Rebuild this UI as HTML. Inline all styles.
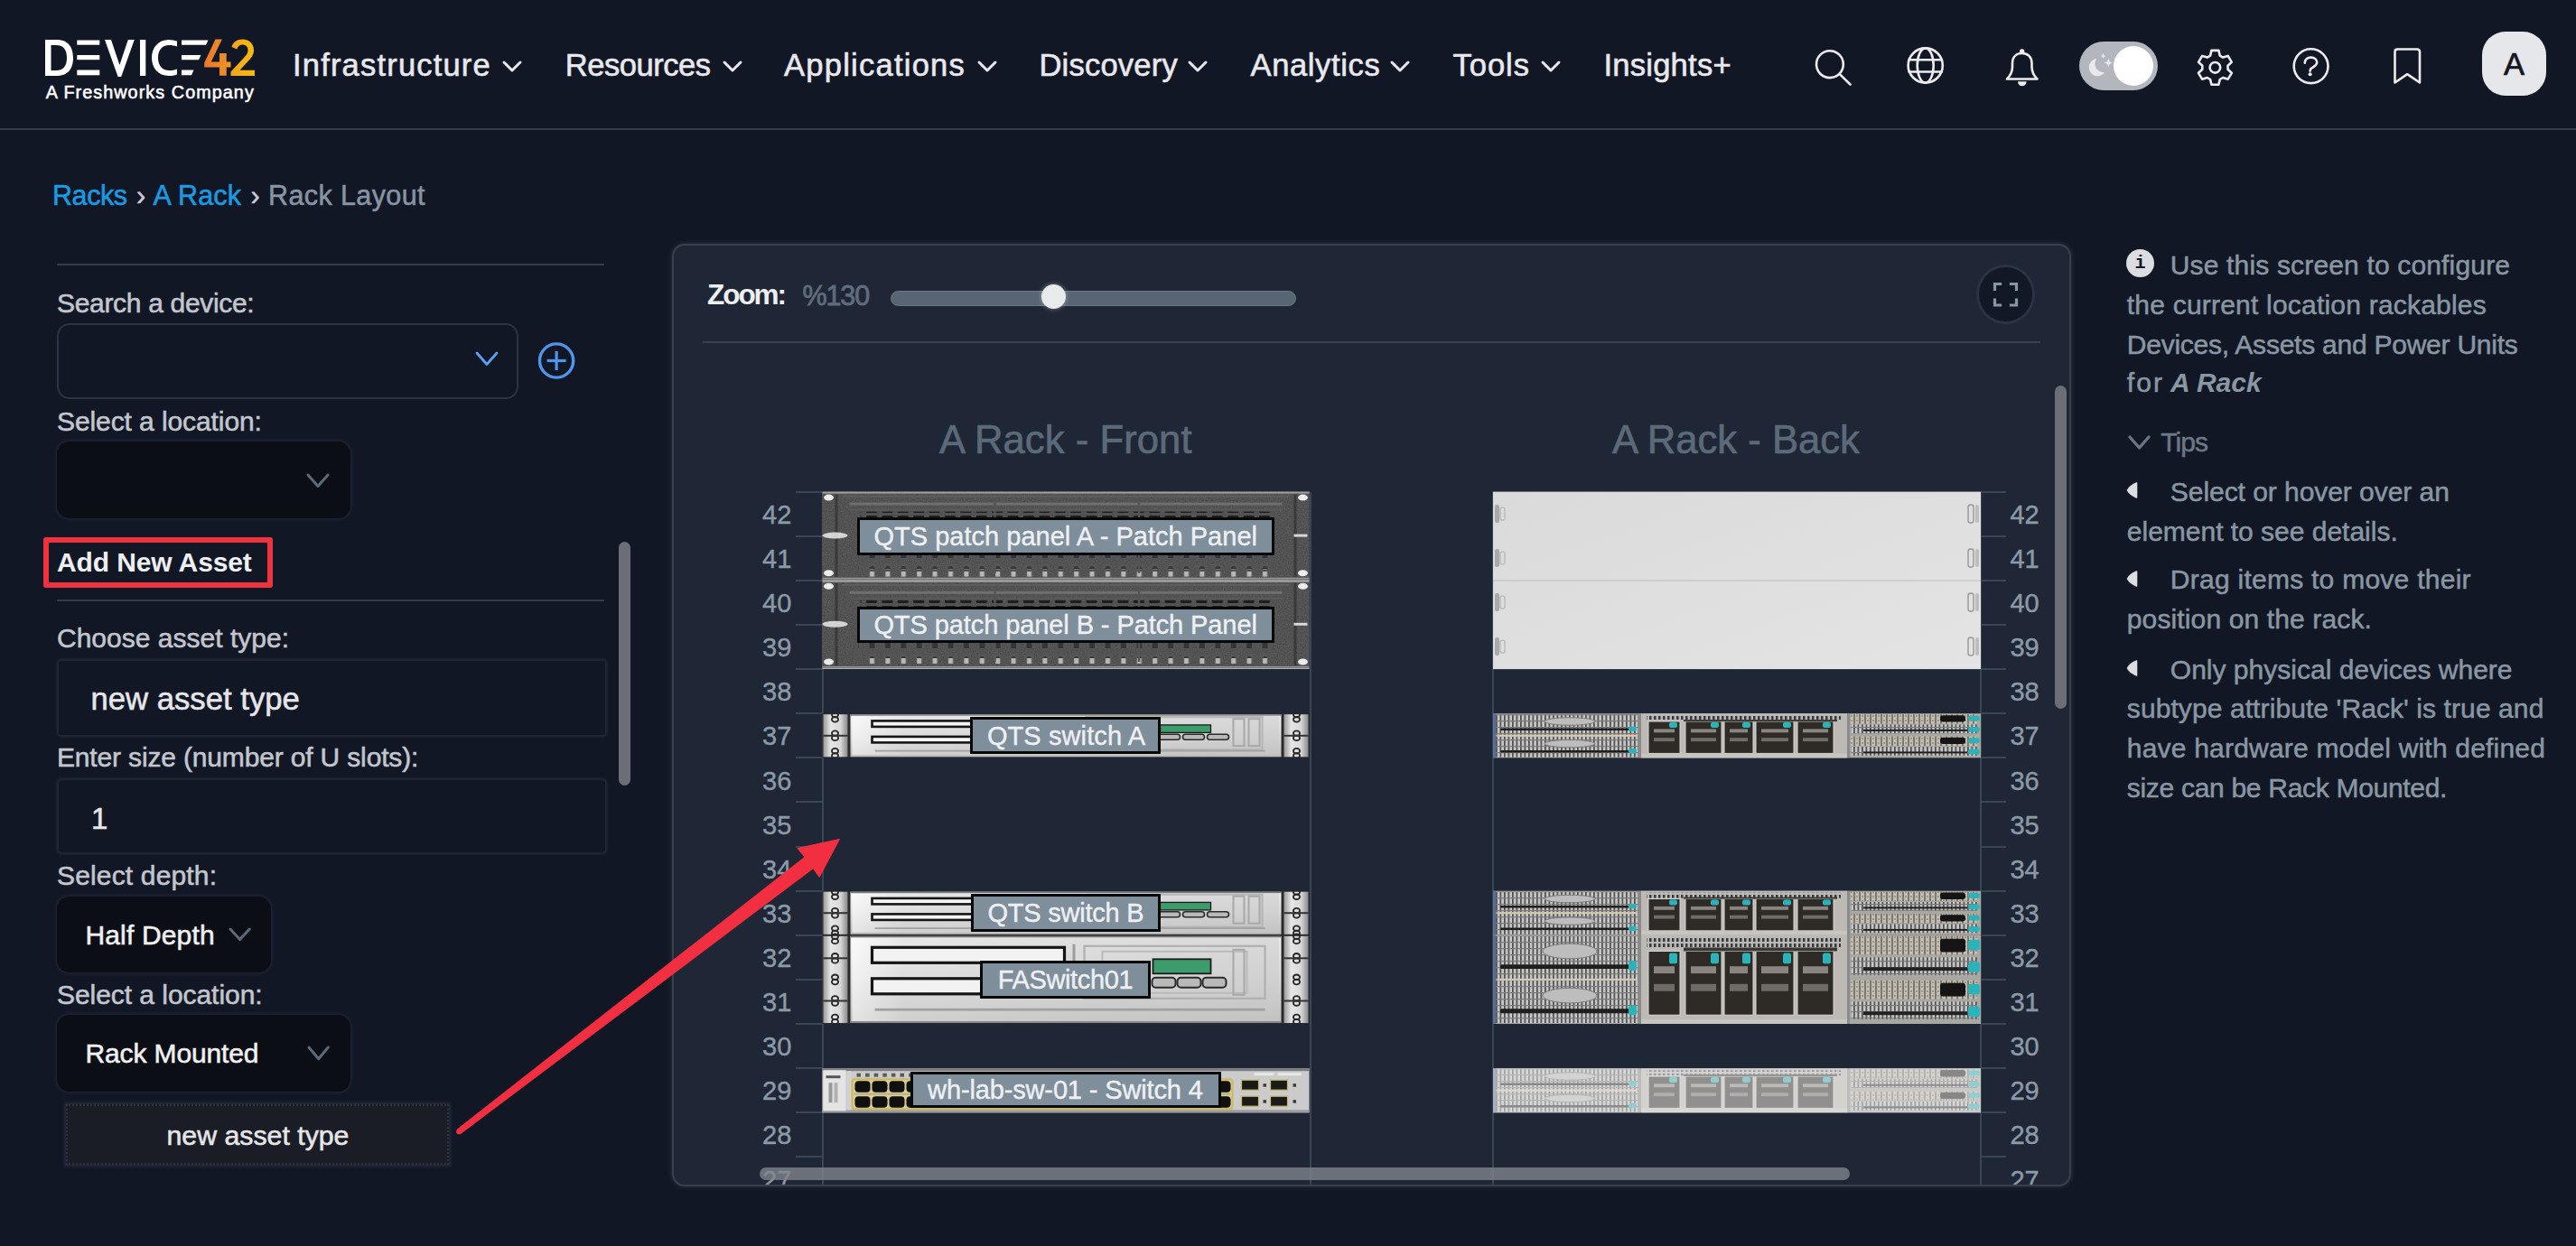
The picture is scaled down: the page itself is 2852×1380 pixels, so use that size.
<!DOCTYPE html>
<html><head><meta charset="utf-8">
<style>
*{margin:0;padding:0;box-sizing:border-box}
html,body{width:2852px;height:1380px;overflow:hidden;background:#121726;font-family:"Liberation Sans",sans-serif;position:relative}
.a{position:absolute;white-space:nowrap;line-height:1}
.box{position:absolute}
.dev{position:absolute;overflow:hidden}
.dl{position:absolute;background:#7e8e9a;border:3px solid #080808;color:#eef0f2;font-size:29px;line-height:1;white-space:nowrap;text-align:center}
</style></head><body>
<div class="box" style="left:0.0px;top:142.0px;width:2852.0px;height:2.0px;background:#353b49"></div>
<svg class="box" style="left:44px;top:38px" width="250" height="80" viewBox="44 38 250 80">
<defs><linearGradient id="g42" gradientUnits="userSpaceOnUse" x1="226" x2="282" y1="0" y2="0"><stop offset="0" stop-color="#e8792a"/><stop offset="0.45" stop-color="#ee8f26"/><stop offset="0.55" stop-color="#f3a51c"/><stop offset="1" stop-color="#f6bb12"/></linearGradient></defs>
<g fill="#ffffff">
<path d="M50,44 L63,44 C76,44 81,53 81,64 C81,75 76,84 63,84 L50,84 Z M56.5,50 L56.5,78 L62,78 C71,78 74,72 74,64 C74,56 71,50 62,50 Z"/>
<rect x="85.3" y="44.5" width="25" height="5.2"/>
<rect x="85.3" y="61" width="25" height="5.2"/>
<rect x="85.3" y="77.5" width="25" height="5.8"/>
<path d="M116,44 L123,44 L132.4,72 L141.8,44 L148.8,44 L134.2,85 L130.6,85 Z"/>
<rect x="155" y="44" width="6.3" height="40"/>
<path d="M196,45.5 L196,51.5 C193,50.5 190.5,50 187.5,50 C179,50 175,56 175,64 C175,72 179,78 187.5,78 C190.5,78 193,77.5 196,76.5 L196,82.5 C193,83.6 190,84 187,84 C175,84 168,75 168,64 C168,53 175,44 187,44 C190,44 193,44.5 196,45.5 Z"/>
<path d="M201,44.5 L230.5,44.5 L228,49.7 L201,49.7 Z"/>
<path d="M201,61 L222.5,61 L220,66.2 L201,66.2 Z"/>
<path d="M201,77.5 L214.5,77.5 L212,83.3 L201,83.3 Z"/>
</g>
<path fill="url(#g42)" d="M238.5,43.4 L245.8,43.4 L233.8,68.4 L243,68.4 L243,59 L250.7,59 L250.7,68.4 L255.5,68.4 L255.5,74.5 L250.7,74.5 L250.7,83.8 L243,83.8 L243,74.5 L226.2,74.5 L226.2,69.5 Z"/>
<path fill="url(#g42)" d="M256.5,52 C258,46.5 262.5,43.5 268.5,43.5 C276,43.5 281,48.5 281,55.5 C281,60.5 278.5,64 274.5,68 L265.5,77.8 L282,77.8 L282,84 L255.5,84 L255.5,79.5 L270,64 C273,60.8 274.5,58.5 274.5,55.5 C274.5,51.5 272,49.5 268.5,49.5 C265.5,49.5 263.3,51.3 262.3,54.5 Z"/>
</svg>
<div class="a" style="left:50.7px;top:93.0px;font-size:19.8px;color:#ffffff;letter-spacing:1.06px;-webkit-text-stroke-width:0.55px;">A Freshworks Company</div>
<div class="a" style="left:324.0px;top:55.4px;font-size:34.5px;color:#e8e8ed;letter-spacing:1.19px;-webkit-text-stroke:0.6px #e8e8ed;">Infrastructure</div>
<svg class="box" style="left:555.0px;top:65.5px" width="24.0" height="15.0"><polyline points="3,3 12.0,12.0 21.0,3" fill="none" stroke="#e8e8ed" stroke-width="3" stroke-linecap="round" stroke-linejoin="round"/></svg>
<div class="a" style="left:625.8px;top:55.4px;font-size:34.5px;color:#e8e8ed;letter-spacing:-0.46px;-webkit-text-stroke:0.6px #e8e8ed;">Resources</div>
<svg class="box" style="left:798.6px;top:65.5px" width="24.0" height="15.0"><polyline points="3,3 12.0,12.0 21.0,3" fill="none" stroke="#e8e8ed" stroke-width="3" stroke-linecap="round" stroke-linejoin="round"/></svg>
<div class="a" style="left:868.0px;top:55.4px;font-size:34.5px;color:#e8e8ed;letter-spacing:1.25px;-webkit-text-stroke:0.6px #e8e8ed;">Applications</div>
<svg class="box" style="left:1080.6px;top:65.5px" width="24.0" height="15.0"><polyline points="3,3 12.0,12.0 21.0,3" fill="none" stroke="#e8e8ed" stroke-width="3" stroke-linecap="round" stroke-linejoin="round"/></svg>
<div class="a" style="left:1150.4px;top:55.4px;font-size:34.5px;color:#e8e8ed;letter-spacing:0.24px;-webkit-text-stroke:0.6px #e8e8ed;">Discovery</div>
<svg class="box" style="left:1314.0px;top:65.5px" width="24.0" height="15.0"><polyline points="3,3 12.0,12.0 21.0,3" fill="none" stroke="#e8e8ed" stroke-width="3" stroke-linecap="round" stroke-linejoin="round"/></svg>
<div class="a" style="left:1384.5px;top:55.4px;font-size:34.5px;color:#e8e8ed;letter-spacing:0.64px;-webkit-text-stroke:0.6px #e8e8ed;">Analytics</div>
<svg class="box" style="left:1538.0px;top:65.5px" width="24.0" height="15.0"><polyline points="3,3 12.0,12.0 21.0,3" fill="none" stroke="#e8e8ed" stroke-width="3" stroke-linecap="round" stroke-linejoin="round"/></svg>
<div class="a" style="left:1608.5px;top:55.4px;font-size:34.5px;color:#e8e8ed;letter-spacing:1.00px;-webkit-text-stroke:0.6px #e8e8ed;">Tools</div>
<svg class="box" style="left:1704.5px;top:65.5px" width="24.0" height="15.0"><polyline points="3,3 12.0,12.0 21.0,3" fill="none" stroke="#e8e8ed" stroke-width="3" stroke-linecap="round" stroke-linejoin="round"/></svg>
<div class="a" style="left:1775.4px;top:55.4px;font-size:34.5px;color:#e8e8ed;letter-spacing:0.27px;-webkit-text-stroke:0.6px #e8e8ed;">Insights+</div>
<svg class="box" style="left:2000px;top:40px" width="840" height="80" viewBox="2000 40 840 80">
<g fill="none" stroke="#ececee" stroke-width="2.6" stroke-linecap="round" stroke-linejoin="round">
<circle cx="2025.9" cy="71.2" r="14.9"/><line x1="2036.8" y1="82.1" x2="2048.5" y2="93.5"/>
<circle cx="2131.7" cy="72.5" r="19.1"/><ellipse cx="2131.7" cy="72.5" rx="9" ry="19.1"/><line x1="2113.6" y1="66.3" x2="2149.8" y2="66.3"/><line x1="2113.6" y1="79.5" x2="2149.8" y2="79.5"/>
<path d="M2222,87.5 L2255.5,87.5 C2252,84 2249.5,80 2249.5,74 L2249.5,70 C2249.5,63 2245,59 2238.7,59 C2232.4,59 2228,63 2228,70 L2228,74 C2228,80 2225.5,84 2222,87.5 Z"/>
<circle cx="2452.4" cy="74.8" r="5.8"/>
<path d="M2457.7,61.6 L2456.4,55.9 L2448.4,55.9 L2447.1,61.6 L2443.7,63.6 L2438.1,61.9 L2434.0,68.8 L2438.3,72.8 L2438.3,76.8 L2434.0,80.8 L2438.1,87.7 L2443.7,86.0 L2447.1,88.0 L2448.4,93.7 L2456.4,93.7 L2457.7,88.0 L2461.1,86.0 L2466.7,87.7 L2470.8,80.8 L2466.5,76.8 L2466.5,72.8 L2470.8,68.8 L2466.7,61.9 L2461.1,63.6 Z"/>
<circle cx="2558.6" cy="73.2" r="18.9"/>
<path d="M2551.8,69.8 C2551.8,65.8 2554.6,63.6 2558.5,63.6 C2562.5,63.6 2565.2,65.9 2565.2,69.1 C2565.2,72.4 2561.8,73.9 2559.4,75.4 C2558,76.3 2557.6,77.2 2557.6,78.6"/>
<path d="M2651.5,91.5 L2651.5,57.5 C2651.5,55.3 2652.7,54.5 2654.5,54.5 L2676,54.5 C2677.8,54.5 2679,55.3 2679,57.5 L2679,91.5 L2665.2,82.2 Z"/>
</g>
<circle cx="2557.6" cy="82.2" r="2" fill="#ececee"/>
<circle cx="2238.7" cy="57" r="2.7" fill="#ececee"/><path d="M2234,90.3 L2243.6,90.3 C2243.4,93.5 2241.4,95.3 2238.8,95.3 C2236.2,95.3 2234.2,93.5 2234,90.3 Z" fill="#ececee"/>
</svg>
<div class="box" style="left:2302.0px;top:45.8px;width:87.0px;height:54.0px;background:#b3b6bc;border-radius:27px"></div>
<div class="box" style="left:2339.5px;top:50.5px;width:44.5px;height:44.5px;border-radius:50%;background:#ffffff"></div>
<svg class="box" style="left:2300px;top:50px" width="45" height="45" viewBox="2300 50 45 45">
<path d="M2321.5,65 C2315.5,66 2312.8,70.5 2312.8,74.8 C2312.8,80 2317,84.2 2322,84.2 C2325,84.2 2328,82.8 2330.2,80.2 C2324.5,80.5 2320,76.5 2319.5,71.5 C2319.3,69 2320,67 2321.5,65 Z" fill="#e8e9ec"/>
<path d="M2328.6,58.8 L2329.5,61.2 L2331.6,62 L2329.5,62.8 L2328.6,65.2 L2327.7,62.8 L2325.6,62 L2327.7,61.2 Z" fill="#e8e9ec"/>
<path d="M2334.4,64.8 L2335.7,68.3 L2339,69.6 L2335.7,70.9 L2334.4,74.4 L2333.1,70.9 L2329.8,69.6 L2333.1,68.3 Z" fill="#e8e9ec"/>
</svg>
<div class="box" style="left:2748.0px;top:35.0px;width:71.0px;height:71.0px;background:#e6e7eb;border-radius:26px"></div>
<div class="a" style="left:2772.0px;top:53.6px;font-size:34.5px;color:#15181f;letter-spacing:0.00px;-webkit-text-stroke-width:0.7px;">A</div>
<div class="a" style="left:58.0px;top:201.2px;font-size:30.5px;color:#1c9ae0;letter-spacing:-0.43px;-webkit-text-stroke-width:0.55px;">Racks</div>
<div class="a" style="left:151.0px;top:201.2px;font-size:30.5px;color:#c9ccd2;letter-spacing:0.00px;-webkit-text-stroke-width:0.55px;">›</div>
<div class="a" style="left:169.6px;top:201.2px;font-size:30.5px;color:#1c9ae0;letter-spacing:0.14px;-webkit-text-stroke-width:0.55px;">A Rack</div>
<div class="a" style="left:277.5px;top:201.2px;font-size:30.5px;color:#c9ccd2;letter-spacing:0.00px;-webkit-text-stroke-width:0.55px;">›</div>
<div class="a" style="left:297.0px;top:201.2px;font-size:30.5px;color:#8794a2;letter-spacing:0.40px;-webkit-text-stroke-width:0.55px;">Rack Layout</div>
<div class="box" style="left:63.0px;top:291.5px;width:606.0px;height:2.0px;background:#343a47"></div>
<div class="a" style="left:63.0px;top:321.0px;font-size:30px;color:#c3c6cd;letter-spacing:-0.32px;-webkit-text-stroke-width:0.55px;">Search a device:</div>
<div class="box" style="left:63.0px;top:358.3px;width:510.5px;height:83.7px;border:2px solid #2b3241;border-radius:14px;background:#121726"></div>
<svg class="box" style="left:524.5px;top:388.0px" width="28.0" height="18.5"><polyline points="3,3 14.0,15.5 25.0,3" fill="none" stroke="#5b9ff0" stroke-width="2.8" stroke-linecap="round" stroke-linejoin="round"/></svg>
<svg class="box" style="left:590px;top:374px" width="52" height="52" viewBox="590 374 52 52">
<circle cx="616.1" cy="399.5" r="18.6" fill="none" stroke="#4f96ea" stroke-width="3.4"/>
<line x1="616.1" y1="389" x2="616.1" y2="410" stroke="#4f96ea" stroke-width="3.2"/>
<line x1="605.6" y1="399.5" x2="626.6" y2="399.5" stroke="#4f96ea" stroke-width="3.2"/>
</svg>
<div class="a" style="left:63.0px;top:452.1px;font-size:30px;color:#c3c6cd;letter-spacing:-0.09px;-webkit-text-stroke-width:0.55px;">Select a location:</div>
<div class="box" style="left:63.0px;top:489.0px;width:325.2px;height:85.3px;background:#0b0e14;border-radius:14px;box-shadow:0 0 4px 1px #232a38"></div>
<svg class="box" style="left:338.0px;top:522.5px" width="28.0" height="18.5"><polyline points="3,3 14.0,15.5 25.0,3" fill="none" stroke="#5d6878" stroke-width="3" stroke-linecap="round" stroke-linejoin="round"/></svg>
<div class="box" style="left:48.2px;top:595.3px;width:253.8px;height:55.5px;border:6px solid #f0323f;border-radius:3px"></div>
<div class="a" style="left:63.0px;top:608.1px;font-size:30px;color:#eeeff1;font-weight:700;letter-spacing:-0.12px;">Add New Asset</div>
<div class="box" style="left:63.0px;top:663.6px;width:606.0px;height:2.0px;background:#343a47"></div>
<div class="box" style="left:685.0px;top:599.6px;width:13.0px;height:270.8px;background:#6b6e76;border-radius:7px"></div>
<div class="a" style="left:63.0px;top:692.3px;font-size:30px;color:#c3c6cd;letter-spacing:0.01px;-webkit-text-stroke-width:0.55px;">Choose asset type:</div>
<div class="box" style="left:63.0px;top:729.5px;width:609.4px;height:86.0px;border:2px solid #1f2633;border-radius:5px;box-shadow:0 0 3px 1px #1c2230"></div>
<div class="a" style="left:100.4px;top:756.6px;font-size:34.7px;color:#e6e6e9;letter-spacing:0.01px;-webkit-text-stroke-width:0.55px;">new asset type</div>
<div class="a" style="left:63.0px;top:823.8px;font-size:30px;color:#c3c6cd;letter-spacing:-0.16px;-webkit-text-stroke-width:0.55px;">Enter size (number of U slots):</div>
<div class="box" style="left:63.0px;top:862.0px;width:609.4px;height:84.3px;border:2px solid #1f2633;border-radius:5px;box-shadow:0 0 3px 1px #1c2230"></div>
<div class="a" style="left:101.0px;top:889.7px;font-size:33px;color:#e6e6e9;letter-spacing:0.00px;-webkit-text-stroke-width:0.55px;">1</div>
<div class="a" style="left:63.0px;top:954.6px;font-size:30px;color:#c3c6cd;letter-spacing:0.16px;-webkit-text-stroke-width:0.55px;">Select depth:</div>
<div class="box" style="left:63.0px;top:992.8px;width:237.0px;height:83.9px;background:#0b0e14;border-radius:14px;box-shadow:0 0 4px 1px #232a38"></div>
<div class="a" style="left:94.4px;top:1021.3px;font-size:30px;color:#f0f0f2;letter-spacing:0.17px;-webkit-text-stroke-width:0.55px;">Half Depth</div>
<svg class="box" style="left:251.5px;top:1026.0px" width="27.2" height="17.6"><polyline points="3,3 13.6,14.6 24.2,3" fill="none" stroke="#5d6878" stroke-width="3" stroke-linecap="round" stroke-linejoin="round"/></svg>
<div class="a" style="left:63.0px;top:1087.3px;font-size:30px;color:#c3c6cd;letter-spacing:-0.05px;-webkit-text-stroke-width:0.55px;">Select a location:</div>
<div class="box" style="left:63.0px;top:1123.9px;width:325.0px;height:84.7px;background:#0b0e14;border-radius:14px;box-shadow:0 0 4px 1px #232a38"></div>
<div class="a" style="left:94.5px;top:1152.4px;font-size:30px;color:#f0f0f2;letter-spacing:-0.13px;-webkit-text-stroke-width:0.55px;">Rack Mounted</div>
<svg class="box" style="left:338.5px;top:1157.0px" width="27.3" height="18.8"><polyline points="3,3 13.7,15.8 24.3,3" fill="none" stroke="#5d6878" stroke-width="3" stroke-linecap="round" stroke-linejoin="round"/></svg>
<div class="box" style="left:73.2px;top:1223.4px;width:424.3px;height:66.2px;background:#1a1d25;border:2px dotted #2b3242;box-shadow:0 0 3px 2px #252c3c"></div>
<div class="a" style="left:184.5px;top:1243.0px;font-size:30.3px;color:#e6e6e9;letter-spacing:-0.01px;-webkit-text-stroke-width:0.55px;">new asset type</div>
<div class="box" style="left:743.5px;top:269.5px;width:1549.5px;height:1044.0px;background:#1f2736;border:2px solid #3a3f4c;border-radius:14px;box-shadow:0 0 5px 1px rgba(58,63,76,0.55)"></div>
<div class="a" style="left:783.0px;top:310.8px;font-size:31.5px;color:#eeeff1;font-weight:700;letter-spacing:-2.05px;">Zoom:</div>
<div class="a" style="left:888.4px;top:311.7px;font-size:30.5px;color:#5f6c7b;letter-spacing:-1.07px;-webkit-text-stroke-width:0.8px;">%130</div>
<div class="box" style="left:986.2px;top:321.9px;width:448.4px;height:17.3px;background:#586574;border:1.5px solid #6a7787;border-radius:9px"></div>
<div class="box" style="left:1152.8px;top:315px;width:26.8px;height:26.8px;border-radius:50%;background:#e9eaec;box-shadow:0 0 4px 1px rgba(210,215,225,0.35)"></div>
<div class="box" style="left:2188.0px;top:292.6px;width:65.0px;height:66.2px;background:#121826;border:3px solid #2b3343;border-radius:50%"></div>
<svg class="box" style="left:2200px;top:306px" width="42" height="42" viewBox="2200 306 42 42">
<g fill="none" stroke="#8696a6" stroke-width="3.2" stroke-linecap="square">
<polyline points="2208.5,320.5 2208.5,314.5 2214.5,314.5"/>
<polyline points="2226.5,314.5 2232.5,314.5 2232.5,320.5"/>
<polyline points="2232.5,332 2232.5,338 2226.5,338"/>
<polyline points="2214.5,338 2208.5,338 2208.5,332"/>
</g></svg>
<div class="box" style="left:778.0px;top:377.8px;width:1481.0px;height:2.0px;background:#3a4252"></div>
<div class="a" style="left:1040.0px;top:466.1px;font-size:43.6px;color:#5b6979;letter-spacing:0.07px;-webkit-text-stroke-width:0.7px;">A Rack - Front</div>
<div class="a" style="left:1785.0px;top:466.1px;font-size:43.6px;color:#5b6979;letter-spacing:0.01px;-webkit-text-stroke-width:0.7px;">A Rack - Back</div>
<div class="box" style="left:745.5px;top:380px;width:1545.5px;height:931.5px;overflow:hidden;border-radius:0 0 12px 12px">
<div class="box" style="left:164.0px;top:164.6px;width:2.0px;height:775.4px;background:#3a4556"></div>
<div class="box" style="left:704.0px;top:164.6px;width:2.0px;height:775.4px;background:#3a4556"></div>
<div class="box" style="left:906.5px;top:164.6px;width:2.0px;height:775.4px;background:#3a4556"></div>
<div class="box" style="left:1446.8px;top:164.6px;width:2.0px;height:775.4px;background:#3a4556"></div>
<div class="box" style="left:135.5px;top:163.6px;width:29.0px;height:2.0px;background:#3a4556"></div>
<div class="box" style="left:1447.5px;top:163.6px;width:28.0px;height:2.0px;background:#3a4556"></div>
<div class="a" style="left:98.5px;top:175.8px;font-size:29px;color:#8b9aa6;letter-spacing:0.00px;-webkit-text-stroke-width:0.4px;">42</div>
<div class="a" style="left:1479.9px;top:175.8px;font-size:29px;color:#8b9aa6;letter-spacing:0.00px;-webkit-text-stroke-width:0.4px;">42</div>
<div class="box" style="left:135.5px;top:212.7px;width:29.0px;height:2.0px;background:#3a4556"></div>
<div class="box" style="left:1447.5px;top:212.7px;width:28.0px;height:2.0px;background:#3a4556"></div>
<div class="a" style="left:98.5px;top:224.9px;font-size:29px;color:#8b9aa6;letter-spacing:0.00px;-webkit-text-stroke-width:0.4px;">41</div>
<div class="a" style="left:1479.9px;top:224.9px;font-size:29px;color:#8b9aa6;letter-spacing:0.00px;-webkit-text-stroke-width:0.4px;">41</div>
<div class="box" style="left:135.5px;top:261.8px;width:29.0px;height:2.0px;background:#3a4556"></div>
<div class="box" style="left:1447.5px;top:261.8px;width:28.0px;height:2.0px;background:#3a4556"></div>
<div class="a" style="left:98.5px;top:274.0px;font-size:29px;color:#8b9aa6;letter-spacing:0.00px;-webkit-text-stroke-width:0.4px;">40</div>
<div class="a" style="left:1479.9px;top:274.0px;font-size:29px;color:#8b9aa6;letter-spacing:0.00px;-webkit-text-stroke-width:0.4px;">40</div>
<div class="box" style="left:135.5px;top:311.0px;width:29.0px;height:2.0px;background:#3a4556"></div>
<div class="box" style="left:1447.5px;top:311.0px;width:28.0px;height:2.0px;background:#3a4556"></div>
<div class="a" style="left:98.5px;top:323.1px;font-size:29px;color:#8b9aa6;letter-spacing:0.00px;-webkit-text-stroke-width:0.4px;">39</div>
<div class="a" style="left:1479.9px;top:323.1px;font-size:29px;color:#8b9aa6;letter-spacing:0.00px;-webkit-text-stroke-width:0.4px;">39</div>
<div class="box" style="left:135.5px;top:360.1px;width:29.0px;height:2.0px;background:#3a4556"></div>
<div class="box" style="left:1447.5px;top:360.1px;width:28.0px;height:2.0px;background:#3a4556"></div>
<div class="a" style="left:98.5px;top:372.2px;font-size:29px;color:#8b9aa6;letter-spacing:0.00px;-webkit-text-stroke-width:0.4px;">38</div>
<div class="a" style="left:1479.9px;top:372.2px;font-size:29px;color:#8b9aa6;letter-spacing:0.00px;-webkit-text-stroke-width:0.4px;">38</div>
<div class="box" style="left:135.5px;top:409.2px;width:29.0px;height:2.0px;background:#3a4556"></div>
<div class="box" style="left:1447.5px;top:409.2px;width:28.0px;height:2.0px;background:#3a4556"></div>
<div class="a" style="left:98.5px;top:421.4px;font-size:29px;color:#8b9aa6;letter-spacing:0.00px;-webkit-text-stroke-width:0.4px;">37</div>
<div class="a" style="left:1479.9px;top:421.4px;font-size:29px;color:#8b9aa6;letter-spacing:0.00px;-webkit-text-stroke-width:0.4px;">37</div>
<div class="box" style="left:135.5px;top:458.3px;width:29.0px;height:2.0px;background:#3a4556"></div>
<div class="box" style="left:1447.5px;top:458.3px;width:28.0px;height:2.0px;background:#3a4556"></div>
<div class="a" style="left:98.5px;top:470.5px;font-size:29px;color:#8b9aa6;letter-spacing:0.00px;-webkit-text-stroke-width:0.4px;">36</div>
<div class="a" style="left:1479.9px;top:470.5px;font-size:29px;color:#8b9aa6;letter-spacing:0.00px;-webkit-text-stroke-width:0.4px;">36</div>
<div class="box" style="left:135.5px;top:507.4px;width:29.0px;height:2.0px;background:#3a4556"></div>
<div class="box" style="left:1447.5px;top:507.4px;width:28.0px;height:2.0px;background:#3a4556"></div>
<div class="a" style="left:98.5px;top:519.6px;font-size:29px;color:#8b9aa6;letter-spacing:0.00px;-webkit-text-stroke-width:0.4px;">35</div>
<div class="a" style="left:1479.9px;top:519.6px;font-size:29px;color:#8b9aa6;letter-spacing:0.00px;-webkit-text-stroke-width:0.4px;">35</div>
<div class="box" style="left:135.5px;top:556.6px;width:29.0px;height:2.0px;background:#3a4556"></div>
<div class="box" style="left:1447.5px;top:556.6px;width:28.0px;height:2.0px;background:#3a4556"></div>
<div class="a" style="left:98.5px;top:568.7px;font-size:29px;color:#8b9aa6;letter-spacing:0.00px;-webkit-text-stroke-width:0.4px;">34</div>
<div class="a" style="left:1479.9px;top:568.7px;font-size:29px;color:#8b9aa6;letter-spacing:0.00px;-webkit-text-stroke-width:0.4px;">34</div>
<div class="box" style="left:135.5px;top:605.7px;width:29.0px;height:2.0px;background:#3a4556"></div>
<div class="box" style="left:1447.5px;top:605.7px;width:28.0px;height:2.0px;background:#3a4556"></div>
<div class="a" style="left:98.5px;top:617.8px;font-size:29px;color:#8b9aa6;letter-spacing:0.00px;-webkit-text-stroke-width:0.4px;">33</div>
<div class="a" style="left:1479.9px;top:617.8px;font-size:29px;color:#8b9aa6;letter-spacing:0.00px;-webkit-text-stroke-width:0.4px;">33</div>
<div class="box" style="left:135.5px;top:654.8px;width:29.0px;height:2.0px;background:#3a4556"></div>
<div class="box" style="left:1447.5px;top:654.8px;width:28.0px;height:2.0px;background:#3a4556"></div>
<div class="a" style="left:98.5px;top:667.0px;font-size:29px;color:#8b9aa6;letter-spacing:0.00px;-webkit-text-stroke-width:0.4px;">32</div>
<div class="a" style="left:1479.9px;top:667.0px;font-size:29px;color:#8b9aa6;letter-spacing:0.00px;-webkit-text-stroke-width:0.4px;">32</div>
<div class="box" style="left:135.5px;top:703.9px;width:29.0px;height:2.0px;background:#3a4556"></div>
<div class="box" style="left:1447.5px;top:703.9px;width:28.0px;height:2.0px;background:#3a4556"></div>
<div class="a" style="left:98.5px;top:716.1px;font-size:29px;color:#8b9aa6;letter-spacing:0.00px;-webkit-text-stroke-width:0.4px;">31</div>
<div class="a" style="left:1479.9px;top:716.1px;font-size:29px;color:#8b9aa6;letter-spacing:0.00px;-webkit-text-stroke-width:0.4px;">31</div>
<div class="box" style="left:135.5px;top:753.0px;width:29.0px;height:2.0px;background:#3a4556"></div>
<div class="box" style="left:1447.5px;top:753.0px;width:28.0px;height:2.0px;background:#3a4556"></div>
<div class="a" style="left:98.5px;top:765.2px;font-size:29px;color:#8b9aa6;letter-spacing:0.00px;-webkit-text-stroke-width:0.4px;">30</div>
<div class="a" style="left:1479.9px;top:765.2px;font-size:29px;color:#8b9aa6;letter-spacing:0.00px;-webkit-text-stroke-width:0.4px;">30</div>
<div class="box" style="left:135.5px;top:802.2px;width:29.0px;height:2.0px;background:#3a4556"></div>
<div class="box" style="left:1447.5px;top:802.2px;width:28.0px;height:2.0px;background:#3a4556"></div>
<div class="a" style="left:98.5px;top:814.3px;font-size:29px;color:#8b9aa6;letter-spacing:0.00px;-webkit-text-stroke-width:0.4px;">29</div>
<div class="a" style="left:1479.9px;top:814.3px;font-size:29px;color:#8b9aa6;letter-spacing:0.00px;-webkit-text-stroke-width:0.4px;">29</div>
<div class="box" style="left:135.5px;top:851.3px;width:29.0px;height:2.0px;background:#3a4556"></div>
<div class="box" style="left:1447.5px;top:851.3px;width:28.0px;height:2.0px;background:#3a4556"></div>
<div class="a" style="left:98.5px;top:863.4px;font-size:29px;color:#8b9aa6;letter-spacing:0.00px;-webkit-text-stroke-width:0.4px;">28</div>
<div class="a" style="left:1479.9px;top:863.4px;font-size:29px;color:#8b9aa6;letter-spacing:0.00px;-webkit-text-stroke-width:0.4px;">28</div>
<div class="box" style="left:135.5px;top:900.4px;width:29.0px;height:2.0px;background:#3a4556"></div>
<div class="box" style="left:1447.5px;top:900.4px;width:28.0px;height:2.0px;background:#3a4556"></div>
<div class="a" style="left:98.5px;top:912.6px;font-size:29px;color:#8b9aa6;letter-spacing:0.00px;-webkit-text-stroke-width:0.4px;">27</div>
<div class="a" style="left:1479.9px;top:912.6px;font-size:29px;color:#8b9aa6;letter-spacing:0.00px;-webkit-text-stroke-width:0.4px;">27</div>
<div class="box" style="left:135.5px;top:949.5px;width:29.0px;height:2.0px;background:#3a4556"></div>
<svg class="box" style="left:-746px;top:-380px" width="2852" height="1380" viewBox="0 0 2852 1380">
<defs>
<linearGradient id="swbody" x1="0" x2="0" y1="0" y2="1"><stop offset="0" stop-color="#f4f4f4"/><stop offset="0.5" stop-color="#dcdcdc"/><stop offset="1" stop-color="#b9b9b9"/></linearGradient>
<linearGradient id="swplate" x1="0" x2="1" y1="0" y2="0"><stop offset="0" stop-color="#ffffff"/><stop offset="0.12" stop-color="#dedede"/><stop offset="0.5" stop-color="#d2d2d2"/><stop offset="1" stop-color="#c8c8c8"/></linearGradient>
<linearGradient id="ear" x1="0" x2="1" y1="0" y2="0"><stop offset="0" stop-color="#9a9a9a"/><stop offset="0.3" stop-color="#e6e6e6"/><stop offset="0.7" stop-color="#d8d8d8"/><stop offset="1" stop-color="#8a8a8a"/></linearGradient>
<linearGradient id="blank" x1="0" x2="1" y1="0" y2="1"><stop offset="0" stop-color="#dadada"/><stop offset="0.5" stop-color="#dfdfdf"/><stop offset="1" stop-color="#e4e4e4"/></linearGradient>
<pattern id="ppports" x="0" y="0" width="17.4" height="10" patternUnits="userSpaceOnUse"><rect x="2" y="1" width="12" height="7" rx="1" fill="#1e1e1e"/></pattern>
<pattern id="pparch" x="0" y="0" width="17.4" height="20" patternUnits="userSpaceOnUse"><path d="M3,18 L3,8 C3,3 14,3 14,8 L14,18 Z" fill="#565656"/><path d="M5.5,18 L5.5,10 C5.5,6 11.5,6 11.5,10 L11.5,18 Z" fill="#353535"/></pattern>
<pattern id="ppdots" x="0" y="0" width="17.4" height="8" patternUnits="userSpaceOnUse"><rect x="6" y="1" width="5" height="6" fill="#b8b8b8"/></pattern>
<pattern id="grid" x="0" y="0" width="4.5" height="7" patternUnits="userSpaceOnUse"><rect width="4.5" height="7" fill="#c6c6c6"/><rect x="0" y="0" width="1.7" height="7" fill="#4f4f4f"/><rect x="0" y="0" width="4.5" height="1.2" fill="#7a7a7a"/></pattern>
<pattern id="mesh" x="0" y="0" width="6" height="5" patternUnits="userSpaceOnUse"><rect width="6" height="5" fill="#c2bdb2"/><rect x="0" y="0" width="2" height="5" fill="#7d776e"/><rect x="3" y="2" width="2" height="2" fill="#9c968c"/></pattern>
<pattern id="slots" x="0" y="0" width="5" height="6" patternUnits="userSpaceOnUse"><rect width="5" height="6" fill="#b8b8b8"/><rect x="1" y="1" width="2.5" height="4" fill="#3a3a3a"/></pattern>
<filter id="noise" x="0" y="0" width="100%" height="100%"><feTurbulence type="fractalNoise" baseFrequency="0.9" numOctaves="2" seed="3"/><feColorMatrix values="0 0 0 0 0.5  0 0 0 0 0.5  0 0 0 0 0.5  0 0 0 0.35 0"/></filter>
</defs>

<rect x="910.5" y="544.6" width="539" height="98.2" fill="#424242"/>
<rect x="910.5" y="544.6" width="539" height="98.2" filter="url(#noise)" opacity="0.8"/>
<rect x="910.5" y="544.6" width="539" height="2" fill="#a0a0a0"/>
<rect x="932.5" y="548.6" width="495" height="2" fill="#5e5e5e"/>
<rect x="910.5" y="639.8" width="539" height="1.5" fill="#9a9a9a"/>
<rect x="910.5" y="641.8" width="539" height="1" fill="#b0b0b0"/>
<rect x="924.5" y="547.6" width="3" height="91.2" fill="#2a2a2a" opacity="0.6"/>
<rect x="1432.5" y="547.6" width="3" height="91.2" fill="#2a2a2a" opacity="0.6"/>
<rect x="940.5" y="556.6" width="479" height="3" fill="#6f6f6f"/>
<rect x="940.5" y="563.6" width="479" height="2" fill="#5a5a5a"/>
<rect x="952.5" y="566.6" width="455" height="10" fill="url(#ppports)"/>
<rect x="950.5" y="610.6" width="459" height="20" fill="url(#pparch)"/>
<rect x="954.5" y="630.6" width="451" height="8" fill="url(#ppdots)"/>
<rect x="1100.2" y="552.6" width="2.5" height="82.2" fill="#555"/>
<rect x="1259.8" y="552.6" width="2.5" height="82.2" fill="#555"/>
<ellipse cx="917.5" cy="551.1" rx="5.5" ry="3.5" fill="#ececec"/>
<ellipse cx="917.5" cy="634.8" rx="5.5" ry="3.5" fill="#ececec"/>
<ellipse cx="1442.5" cy="551.1" rx="5.5" ry="3.5" fill="#ececec"/>
<ellipse cx="1442.5" cy="634.8" rx="5.5" ry="3.5" fill="#ececec"/>
<ellipse cx="924.5" cy="593.1" rx="14" ry="3.5" fill="#e2e2e2" opacity="0.9"/>
<rect x="1432.5" y="591.6" width="15" height="3" fill="#d8d8d8"/>
<rect x="910.5" y="642.8" width="539" height="98.2" fill="#424242"/>
<rect x="910.5" y="642.8" width="539" height="98.2" filter="url(#noise)" opacity="0.8"/>
<rect x="910.5" y="642.8" width="539" height="2" fill="#a0a0a0"/>
<rect x="932.5" y="646.8" width="495" height="2" fill="#5e5e5e"/>
<rect x="910.5" y="738.0" width="539" height="1.5" fill="#9a9a9a"/>
<rect x="910.5" y="740.0" width="539" height="1" fill="#b0b0b0"/>
<rect x="924.5" y="645.8" width="3" height="91.2" fill="#2a2a2a" opacity="0.6"/>
<rect x="1432.5" y="645.8" width="3" height="91.2" fill="#2a2a2a" opacity="0.6"/>
<rect x="940.5" y="654.8" width="479" height="3" fill="#6f6f6f"/>
<rect x="940.5" y="661.8" width="479" height="2" fill="#5a5a5a"/>
<rect x="952.5" y="664.8" width="455" height="10" fill="url(#ppports)"/>
<rect x="950.5" y="708.8" width="459" height="20" fill="url(#pparch)"/>
<rect x="954.5" y="728.8" width="451" height="8" fill="url(#ppdots)"/>
<rect x="1100.2" y="650.8" width="2.5" height="82.2" fill="#555"/>
<rect x="1259.8" y="650.8" width="2.5" height="82.2" fill="#555"/>
<ellipse cx="917.5" cy="649.3" rx="5.5" ry="3.5" fill="#ececec"/>
<ellipse cx="917.5" cy="733.0" rx="5.5" ry="3.5" fill="#ececec"/>
<ellipse cx="1442.5" cy="649.3" rx="5.5" ry="3.5" fill="#ececec"/>
<ellipse cx="1442.5" cy="733.0" rx="5.5" ry="3.5" fill="#ececec"/>
<ellipse cx="924.5" cy="691.3" rx="14" ry="3.5" fill="#e2e2e2" opacity="0.9"/>
<rect x="1432.5" y="689.8" width="15" height="3" fill="#d8d8d8"/>
<rect x="910.5" y="790.2" width="539" height="49.1" fill="#2a2a2a"/>
<rect x="911.5" y="791.2" width="27" height="47.1" fill="url(#ear)"/>
<rect x="1421.5" y="791.2" width="27" height="47.1" fill="url(#ear)"/>
<rect x="941.5" y="791.2" width="477" height="47.1" fill="url(#swbody)"/>
<rect x="943.5" y="793.2" width="473" height="43.1" fill="url(#swplate)" opacity="0.6"/>
<ellipse cx="924.5" cy="791.6" rx="3.6" ry="2.8" fill="none" stroke="#262626" stroke-width="1.8"/><ellipse cx="924.5" cy="796.8" rx="3.6" ry="2.8" fill="none" stroke="#262626" stroke-width="1.8"/>
<ellipse cx="1435.5" cy="791.6" rx="3.6" ry="2.8" fill="none" stroke="#262626" stroke-width="1.8"/><ellipse cx="1435.5" cy="796.8" rx="3.6" ry="2.8" fill="none" stroke="#262626" stroke-width="1.8"/>
<ellipse cx="924.5" cy="812.1" rx="3.6" ry="2.8" fill="none" stroke="#262626" stroke-width="1.8"/><ellipse cx="924.5" cy="817.4" rx="3.6" ry="2.8" fill="none" stroke="#262626" stroke-width="1.8"/>
<ellipse cx="1435.5" cy="812.1" rx="3.6" ry="2.8" fill="none" stroke="#262626" stroke-width="1.8"/><ellipse cx="1435.5" cy="817.4" rx="3.6" ry="2.8" fill="none" stroke="#262626" stroke-width="1.8"/>
<ellipse cx="924.5" cy="831.7" rx="3.6" ry="2.8" fill="none" stroke="#262626" stroke-width="1.8"/><ellipse cx="924.5" cy="836.9" rx="3.6" ry="2.8" fill="none" stroke="#262626" stroke-width="1.8"/>
<ellipse cx="1435.5" cy="831.7" rx="3.6" ry="2.8" fill="none" stroke="#262626" stroke-width="1.8"/><ellipse cx="1435.5" cy="836.9" rx="3.6" ry="2.8" fill="none" stroke="#262626" stroke-width="1.8"/>
<rect x="911.5" y="813.8" width="27" height="2" fill="#333"/><rect x="1421.5" y="813.8" width="27" height="2" fill="#333"/>
<rect x="941.5" y="791.2" width="477" height="1.5" fill="#777"/>
<rect x="965.5" y="798.4" width="215" height="6.5" fill="#f4f4f4" stroke="#151515" stroke-width="2.6"/>
<rect x="965.5" y="815.9" width="215" height="6.5" fill="#f4f4f4" stroke="#151515" stroke-width="2.6"/>
<rect x="1202.5" y="794.2" width="195" height="36" fill="none" stroke="#b4b4b4" stroke-width="2"/>
<rect x="1365.5" y="796.2" width="12" height="30" fill="none" stroke="#a8a8a8" stroke-width="2"/>
<rect x="1382.5" y="796.2" width="12" height="30" fill="none" stroke="#a8a8a8" stroke-width="2"/>
<rect x="1284.5" y="802.9" width="56" height="8.5" fill="#3c9c6c" stroke="#1c1c1c" stroke-width="1.3"/>
<rect x="1282.5" y="813.2" width="24" height="6" rx="3" fill="#b9b9b9" stroke="#2a2a2a" stroke-width="1.6"/>
<rect x="1309.5" y="813.2" width="24" height="6" rx="3" fill="#b9b9b9" stroke="#2a2a2a" stroke-width="1.6"/>
<rect x="1336.5" y="813.2" width="24" height="6" rx="3" fill="#b9b9b9" stroke="#2a2a2a" stroke-width="1.6"/>
<rect x="968.5" y="830.7" width="432" height="1.8" fill="#a2a2a2"/>
<rect x="910.5" y="986.7" width="539" height="49.1" fill="#2a2a2a"/>
<rect x="911.5" y="987.7" width="27" height="47.1" fill="url(#ear)"/>
<rect x="1421.5" y="987.7" width="27" height="47.1" fill="url(#ear)"/>
<rect x="941.5" y="987.7" width="477" height="47.1" fill="url(#swbody)"/>
<rect x="943.5" y="989.7" width="473" height="43.1" fill="url(#swplate)" opacity="0.6"/>
<ellipse cx="924.5" cy="988.1" rx="3.6" ry="2.8" fill="none" stroke="#262626" stroke-width="1.8"/><ellipse cx="924.5" cy="993.3" rx="3.6" ry="2.8" fill="none" stroke="#262626" stroke-width="1.8"/>
<ellipse cx="1435.5" cy="988.1" rx="3.6" ry="2.8" fill="none" stroke="#262626" stroke-width="1.8"/><ellipse cx="1435.5" cy="993.3" rx="3.6" ry="2.8" fill="none" stroke="#262626" stroke-width="1.8"/>
<ellipse cx="924.5" cy="1008.6" rx="3.6" ry="2.8" fill="none" stroke="#262626" stroke-width="1.8"/><ellipse cx="924.5" cy="1013.8" rx="3.6" ry="2.8" fill="none" stroke="#262626" stroke-width="1.8"/>
<ellipse cx="1435.5" cy="1008.6" rx="3.6" ry="2.8" fill="none" stroke="#262626" stroke-width="1.8"/><ellipse cx="1435.5" cy="1013.8" rx="3.6" ry="2.8" fill="none" stroke="#262626" stroke-width="1.8"/>
<ellipse cx="924.5" cy="1028.2" rx="3.6" ry="2.8" fill="none" stroke="#262626" stroke-width="1.8"/><ellipse cx="924.5" cy="1033.4" rx="3.6" ry="2.8" fill="none" stroke="#262626" stroke-width="1.8"/>
<ellipse cx="1435.5" cy="1028.2" rx="3.6" ry="2.8" fill="none" stroke="#262626" stroke-width="1.8"/><ellipse cx="1435.5" cy="1033.4" rx="3.6" ry="2.8" fill="none" stroke="#262626" stroke-width="1.8"/>
<rect x="911.5" y="1010.2" width="27" height="2" fill="#333"/><rect x="1421.5" y="1010.2" width="27" height="2" fill="#333"/>
<rect x="941.5" y="987.7" width="477" height="1.5" fill="#777"/>
<rect x="965.5" y="994.9" width="215" height="6.5" fill="#f4f4f4" stroke="#151515" stroke-width="2.6"/>
<rect x="965.5" y="1012.4" width="215" height="6.5" fill="#f4f4f4" stroke="#151515" stroke-width="2.6"/>
<rect x="1202.5" y="990.7" width="195" height="36" fill="none" stroke="#b4b4b4" stroke-width="2"/>
<rect x="1365.5" y="992.7" width="12" height="30" fill="none" stroke="#a8a8a8" stroke-width="2"/>
<rect x="1382.5" y="992.7" width="12" height="30" fill="none" stroke="#a8a8a8" stroke-width="2"/>
<rect x="1284.5" y="999.4" width="56" height="8.5" fill="#3c9c6c" stroke="#1c1c1c" stroke-width="1.3"/>
<rect x="1282.5" y="1009.7" width="24" height="6" rx="3" fill="#b9b9b9" stroke="#2a2a2a" stroke-width="1.6"/>
<rect x="1309.5" y="1009.7" width="24" height="6" rx="3" fill="#b9b9b9" stroke="#2a2a2a" stroke-width="1.6"/>
<rect x="1336.5" y="1009.7" width="24" height="6" rx="3" fill="#b9b9b9" stroke="#2a2a2a" stroke-width="1.6"/>
<rect x="968.5" y="1027.2" width="432" height="1.8" fill="#a2a2a2"/>
<rect x="910.5" y="1035.8" width="539" height="98.2" fill="#2a2a2a"/>
<rect x="911.5" y="1036.8" width="27" height="96.2" fill="url(#ear)"/>
<rect x="1421.5" y="1036.8" width="27" height="96.2" fill="url(#ear)"/>
<rect x="941.5" y="1036.8" width="477" height="96.2" fill="url(#swbody)"/>
<rect x="943.5" y="1038.8" width="473" height="92.2" fill="url(#swplate)" opacity="0.6"/>
<ellipse cx="924.5" cy="1037.2" rx="3.6" ry="2.8" fill="none" stroke="#262626" stroke-width="1.8"/><ellipse cx="924.5" cy="1042.4" rx="3.6" ry="2.8" fill="none" stroke="#262626" stroke-width="1.8"/>
<ellipse cx="1435.5" cy="1037.2" rx="3.6" ry="2.8" fill="none" stroke="#262626" stroke-width="1.8"/><ellipse cx="1435.5" cy="1042.4" rx="3.6" ry="2.8" fill="none" stroke="#262626" stroke-width="1.8"/>
<ellipse cx="924.5" cy="1058.8" rx="3.6" ry="2.8" fill="none" stroke="#262626" stroke-width="1.8"/><ellipse cx="924.5" cy="1063.9" rx="3.6" ry="2.8" fill="none" stroke="#262626" stroke-width="1.8"/>
<ellipse cx="1435.5" cy="1058.8" rx="3.6" ry="2.8" fill="none" stroke="#262626" stroke-width="1.8"/><ellipse cx="1435.5" cy="1063.9" rx="3.6" ry="2.8" fill="none" stroke="#262626" stroke-width="1.8"/>
<ellipse cx="924.5" cy="1082.3" rx="3.6" ry="2.8" fill="none" stroke="#262626" stroke-width="1.8"/><ellipse cx="924.5" cy="1087.5" rx="3.6" ry="2.8" fill="none" stroke="#262626" stroke-width="1.8"/>
<ellipse cx="1435.5" cy="1082.3" rx="3.6" ry="2.8" fill="none" stroke="#262626" stroke-width="1.8"/><ellipse cx="1435.5" cy="1087.5" rx="3.6" ry="2.8" fill="none" stroke="#262626" stroke-width="1.8"/>
<ellipse cx="924.5" cy="1105.9" rx="3.6" ry="2.8" fill="none" stroke="#262626" stroke-width="1.8"/><ellipse cx="924.5" cy="1111.0" rx="3.6" ry="2.8" fill="none" stroke="#262626" stroke-width="1.8"/>
<ellipse cx="1435.5" cy="1105.9" rx="3.6" ry="2.8" fill="none" stroke="#262626" stroke-width="1.8"/><ellipse cx="1435.5" cy="1111.0" rx="3.6" ry="2.8" fill="none" stroke="#262626" stroke-width="1.8"/>
<ellipse cx="924.5" cy="1126.4" rx="3.6" ry="2.8" fill="none" stroke="#262626" stroke-width="1.8"/><ellipse cx="924.5" cy="1131.6" rx="3.6" ry="2.8" fill="none" stroke="#262626" stroke-width="1.8"/>
<ellipse cx="1435.5" cy="1126.4" rx="3.6" ry="2.8" fill="none" stroke="#262626" stroke-width="1.8"/><ellipse cx="1435.5" cy="1131.6" rx="3.6" ry="2.8" fill="none" stroke="#262626" stroke-width="1.8"/>
<rect x="911.5" y="1060.3" width="27" height="2" fill="#333"/><rect x="1421.5" y="1060.3" width="27" height="2" fill="#333"/>
<rect x="911.5" y="1107.5" width="27" height="2" fill="#333"/><rect x="1421.5" y="1107.5" width="27" height="2" fill="#333"/>
<rect x="941.5" y="1036.8" width="477" height="1.5" fill="#777"/>
<rect x="965.5" y="1049.3" width="213" height="17" fill="#f2f2f2" stroke="#151515" stroke-width="3.2"/>
<rect x="965.5" y="1083.8" width="213" height="17" fill="#f2f2f2" stroke="#151515" stroke-width="3.2"/>
<rect x="1187.5" y="1045.8" width="3" height="58" fill="#9c9c9c"/>
<rect x="1200.5" y="1047.8" width="200" height="58" fill="none" stroke="#b0b0b0" stroke-width="2.2"/>
<rect x="1220.5" y="1053.8" width="160" height="46" fill="none" stroke="#bababa" stroke-width="2"/>
<rect x="1365.5" y="1051.8" width="12" height="50" fill="none" stroke="#a8a8a8" stroke-width="2"/>
<rect x="1276.5" y="1062.3" width="64" height="16" fill="#3c9c6c" stroke="#1c1c1c" stroke-width="1.8"/>
<rect x="1275.5" y="1082.8" width="26" height="11" rx="4" fill="#b9b9b9" stroke="#2a2a2a" stroke-width="2"/>
<rect x="1303.5" y="1082.8" width="26" height="11" rx="4" fill="#b9b9b9" stroke="#2a2a2a" stroke-width="2"/>
<rect x="1331.5" y="1082.8" width="26" height="11" rx="4" fill="#b9b9b9" stroke="#2a2a2a" stroke-width="2"/>
<rect x="968.5" y="1116.8" width="432" height="2.8" fill="#a0a0a0"/>
<rect x="941.5" y="1131.0" width="477" height="2" fill="#8a8a8a"/>
<rect x="910.5" y="1183.2" width="539" height="49.1" fill="#cbcbcb"/>
<rect x="910.5" y="1183.2" width="539" height="3" fill="#7c7c7c"/>
<rect x="910.5" y="1229.3" width="539" height="3" fill="#9a9a9a"/>
<rect x="911.5" y="1185.2" width="25" height="45.1" fill="#e4e4e4"/>
<rect x="914.5" y="1191.2" width="16" height="3" fill="#555"/>
<rect x="917.5" y="1199.2" width="4" height="22" fill="#9a9a9a"/><rect x="923.5" y="1199.2" width="4" height="22" fill="#b0b0b0"/>
<rect x="937.5" y="1186.2" width="5" height="43.1" fill="#d2d2d2"/>
<rect x="948.5" y="1188.7" width="4.5" height="4" fill="#5a5a5a"/>
<rect x="958.1" y="1188.7" width="4.5" height="4" fill="#5a5a5a"/>
<rect x="967.7" y="1188.7" width="4.5" height="4" fill="#5a5a5a"/>
<rect x="977.3" y="1188.7" width="4.5" height="4" fill="#5a5a5a"/>
<rect x="986.9" y="1188.7" width="4.5" height="4" fill="#5a5a5a"/>
<rect x="996.5" y="1188.7" width="4.5" height="4" fill="#5a5a5a"/>
<rect x="1006.1" y="1188.7" width="4.5" height="4" fill="#5a5a5a"/>
<rect x="943.5" y="1195.2" width="421" height="33" rx="3" fill="#d9cf98" stroke="#cdb85c" stroke-width="2"/>
<rect x="946.5" y="1197.2" width="17" height="12.5" rx="4" fill="#101010"/>
<rect x="965.5" y="1197.2" width="17" height="12.5" rx="4" fill="#101010"/>
<rect x="984.5" y="1197.2" width="17" height="12.5" rx="4" fill="#101010"/>
<rect x="1003.5" y="1197.2" width="17" height="12.5" rx="4" fill="#101010"/>
<rect x="1022.5" y="1197.2" width="17" height="12.5" rx="4" fill="#101010"/>
<rect x="1041.5" y="1197.2" width="17" height="12.5" rx="4" fill="#101010"/>
<rect x="1060.5" y="1197.2" width="17" height="12.5" rx="4" fill="#101010"/>
<rect x="1079.5" y="1197.2" width="17" height="12.5" rx="4" fill="#101010"/>
<rect x="1098.5" y="1197.2" width="17" height="12.5" rx="4" fill="#101010"/>
<rect x="1117.5" y="1197.2" width="17" height="12.5" rx="4" fill="#101010"/>
<rect x="1136.5" y="1197.2" width="17" height="12.5" rx="4" fill="#101010"/>
<rect x="1155.5" y="1197.2" width="17" height="12.5" rx="4" fill="#101010"/>
<rect x="1174.5" y="1197.2" width="17" height="12.5" rx="4" fill="#101010"/>
<rect x="1193.5" y="1197.2" width="17" height="12.5" rx="4" fill="#101010"/>
<rect x="1212.5" y="1197.2" width="17" height="12.5" rx="4" fill="#101010"/>
<rect x="1231.5" y="1197.2" width="17" height="12.5" rx="4" fill="#101010"/>
<rect x="1250.5" y="1197.2" width="17" height="12.5" rx="4" fill="#101010"/>
<rect x="1269.5" y="1197.2" width="17" height="12.5" rx="4" fill="#101010"/>
<rect x="1288.5" y="1197.2" width="17" height="12.5" rx="4" fill="#101010"/>
<rect x="1307.5" y="1197.2" width="17" height="12.5" rx="4" fill="#101010"/>
<rect x="1326.5" y="1197.2" width="17" height="12.5" rx="4" fill="#101010"/>
<rect x="1345.5" y="1197.2" width="17" height="12.5" rx="4" fill="#101010"/>
<rect x="946.5" y="1214.2" width="17" height="12.5" rx="4" fill="#101010"/>
<rect x="965.5" y="1214.2" width="17" height="12.5" rx="4" fill="#101010"/>
<rect x="984.5" y="1214.2" width="17" height="12.5" rx="4" fill="#101010"/>
<rect x="1003.5" y="1214.2" width="17" height="12.5" rx="4" fill="#101010"/>
<rect x="1022.5" y="1214.2" width="17" height="12.5" rx="4" fill="#101010"/>
<rect x="1041.5" y="1214.2" width="17" height="12.5" rx="4" fill="#101010"/>
<rect x="1060.5" y="1214.2" width="17" height="12.5" rx="4" fill="#101010"/>
<rect x="1079.5" y="1214.2" width="17" height="12.5" rx="4" fill="#101010"/>
<rect x="1098.5" y="1214.2" width="17" height="12.5" rx="4" fill="#101010"/>
<rect x="1117.5" y="1214.2" width="17" height="12.5" rx="4" fill="#101010"/>
<rect x="1136.5" y="1214.2" width="17" height="12.5" rx="4" fill="#101010"/>
<rect x="1155.5" y="1214.2" width="17" height="12.5" rx="4" fill="#101010"/>
<rect x="1174.5" y="1214.2" width="17" height="12.5" rx="4" fill="#101010"/>
<rect x="1193.5" y="1214.2" width="17" height="12.5" rx="4" fill="#101010"/>
<rect x="1212.5" y="1214.2" width="17" height="12.5" rx="4" fill="#101010"/>
<rect x="1231.5" y="1214.2" width="17" height="12.5" rx="4" fill="#101010"/>
<rect x="1250.5" y="1214.2" width="17" height="12.5" rx="4" fill="#101010"/>
<rect x="1269.5" y="1214.2" width="17" height="12.5" rx="4" fill="#101010"/>
<rect x="1288.5" y="1214.2" width="17" height="12.5" rx="4" fill="#101010"/>
<rect x="1307.5" y="1214.2" width="17" height="12.5" rx="4" fill="#101010"/>
<rect x="1326.5" y="1214.2" width="17" height="12.5" rx="4" fill="#101010"/>
<rect x="1345.5" y="1214.2" width="17" height="12.5" rx="4" fill="#101010"/>
<rect x="945.5" y="1210.7" width="417" height="2" fill="#b9ae8a"/>
<rect x="1374.5" y="1196.2" width="19" height="11" fill="#1a1a1a" stroke="#c9b866" stroke-width="1.2"/>
<rect x="1398.5" y="1200.2" width="3.5" height="3.5" fill="#3a3a3a"/>
<rect x="1406.5" y="1196.2" width="19" height="11" fill="#1a1a1a" stroke="#c9b866" stroke-width="1.2"/>
<rect x="1431.5" y="1200.2" width="3.5" height="3.5" fill="#3a3a3a"/>
<rect x="1374.5" y="1214.2" width="19" height="11" fill="#1a1a1a" stroke="#c9b866" stroke-width="1.2"/>
<rect x="1398.5" y="1218.2" width="3.5" height="3.5" fill="#3a3a3a"/>
<rect x="1406.5" y="1214.2" width="19" height="11" fill="#1a1a1a" stroke="#c9b866" stroke-width="1.2"/>
<rect x="1431.5" y="1218.2" width="3.5" height="3.5" fill="#3a3a3a"/>
<rect x="1388.5" y="1188.2" width="22" height="3" fill="#e6e6e6"/><rect x="1414.5" y="1188.2" width="26" height="3" fill="#e6e6e6"/>
<rect x="1653.0" y="544.6" width="540" height="196.5" fill="url(#blank)"/>
<rect x="1653.0" y="642.4" width="540" height="1.2" fill="#c2c2c2"/>
<rect x="1655.0" y="559.1" width="5" height="20" rx="2" fill="#a9a9a9"/><rect x="1661.0" y="562.1" width="5" height="14" rx="2" fill="none" stroke="#b9b9b9" stroke-width="1.4"/>
<rect x="2179.0" y="559.1" width="6" height="20" rx="2.5" fill="none" stroke="#a0a0a0" stroke-width="1.6"/><rect x="2187.0" y="559.1" width="4" height="20" rx="2" fill="#bdbdbd"/>
<rect x="1655.0" y="608.1" width="5" height="20" rx="2" fill="#a9a9a9"/><rect x="1661.0" y="611.1" width="5" height="14" rx="2" fill="none" stroke="#b9b9b9" stroke-width="1.4"/>
<rect x="2179.0" y="608.1" width="6" height="20" rx="2.5" fill="none" stroke="#a0a0a0" stroke-width="1.6"/><rect x="2187.0" y="608.1" width="4" height="20" rx="2" fill="#bdbdbd"/>
<rect x="1655.0" y="657.1" width="5" height="20" rx="2" fill="#a9a9a9"/><rect x="1661.0" y="660.1" width="5" height="14" rx="2" fill="none" stroke="#b9b9b9" stroke-width="1.4"/>
<rect x="2179.0" y="657.1" width="6" height="20" rx="2.5" fill="none" stroke="#a0a0a0" stroke-width="1.6"/><rect x="2187.0" y="657.1" width="4" height="20" rx="2" fill="#bdbdbd"/>
<rect x="1655.0" y="706.1" width="5" height="20" rx="2" fill="#a9a9a9"/><rect x="1661.0" y="709.1" width="5" height="14" rx="2" fill="none" stroke="#b9b9b9" stroke-width="1.4"/>
<rect x="2179.0" y="706.1" width="6" height="20" rx="2.5" fill="none" stroke="#a0a0a0" stroke-width="1.6"/><rect x="2187.0" y="706.1" width="4" height="20" rx="2" fill="#bdbdbd"/>

<g opacity="1">
<rect x="1653.0" y="790.2" width="540" height="49.1" fill="#a9a7a2"/>
<rect x="1656.0" y="791.2" width="157" height="22.6" fill="url(#grid)"/>
<ellipse cx="1738.0" cy="799.0" rx="28" ry="4.2" fill="#bdbdbd" stroke="#7a7a7a" stroke-width="1"/>
<rect x="1661.0" y="806.4" width="150" height="2.5" rx="1.5" fill="#1f1f1f"/>
<rect x="1803.0" y="804.4" width="9" height="5.4" rx="2" fill="#2ab3b8"/>
<rect x="1656.0" y="815.8" width="157" height="22.6" fill="url(#grid)"/>
<ellipse cx="1738.0" cy="823.6" rx="28" ry="4.2" fill="#bdbdbd" stroke="#7a7a7a" stroke-width="1"/>
<rect x="1658.0" y="813.8" width="155" height="2" fill="#d9c9b0"/>
<rect x="1661.0" y="831.0" width="150" height="2.5" rx="1.5" fill="#1f1f1f"/>
<rect x="1803.0" y="829.0" width="9" height="5.4" rx="2" fill="#2ab3b8"/>
<rect x="1653.0" y="790.2" width="3" height="49.1" fill="#5b6f98"/>
<rect x="1813.0" y="790.2" width="4" height="49.1" fill="#8b8b8b"/>
<rect x="1817.0" y="790.2" width="228" height="49.1" fill="#bdbab5"/>
<rect x="1823.0" y="792.2" width="215" height="5.9" fill="url(#slots)"/>
<rect x="1825.0" y="799.0" width="35" height="35.4" fill="#2e2a25" stroke="#d8d8d8" stroke-width="1"/>
<rect x="1831.0" y="807.4" width="23" height="3.9" fill="#8a8580"/>
<rect x="1831.0" y="817.2" width="23" height="3.9" fill="#6f6b66"/>
<rect x="1848.0" y="800.0" width="9" height="5.9" rx="2" fill="#2ab3b8"/>
<rect x="1866.0" y="799.0" width="40" height="35.4" fill="#2e2a25" stroke="#d8d8d8" stroke-width="1"/>
<rect x="1872.0" y="807.4" width="28" height="3.9" fill="#8a8580"/>
<rect x="1872.0" y="817.2" width="28" height="3.9" fill="#6f6b66"/>
<rect x="1894.0" y="800.0" width="9" height="5.9" rx="2" fill="#2ab3b8"/>
<rect x="1909.0" y="799.0" width="32" height="35.4" fill="#2e2a25" stroke="#d8d8d8" stroke-width="1"/>
<rect x="1915.0" y="807.4" width="20" height="3.9" fill="#8a8580"/>
<rect x="1915.0" y="817.2" width="20" height="3.9" fill="#6f6b66"/>
<rect x="1929.0" y="800.0" width="9" height="5.9" rx="2" fill="#2ab3b8"/>
<rect x="1944.0" y="799.0" width="42" height="35.4" fill="#2e2a25" stroke="#d8d8d8" stroke-width="1"/>
<rect x="1950.0" y="807.4" width="30" height="3.9" fill="#8a8580"/>
<rect x="1950.0" y="817.2" width="30" height="3.9" fill="#6f6b66"/>
<rect x="1974.0" y="800.0" width="9" height="5.9" rx="2" fill="#2ab3b8"/>
<rect x="1990.0" y="799.0" width="40" height="35.4" fill="#2e2a25" stroke="#d8d8d8" stroke-width="1"/>
<rect x="1996.0" y="807.4" width="28" height="3.9" fill="#8a8580"/>
<rect x="1996.0" y="817.2" width="28" height="3.9" fill="#6f6b66"/>
<rect x="2018.0" y="800.0" width="9" height="5.9" rx="2" fill="#2ab3b8"/>
<rect x="1817.0" y="834.3" width="228" height="5" fill="#c8c5c0"/>
<rect x="1864.0" y="797.1" width="170" height="2.0" fill="#3a3632"/>
<rect x="2045.0" y="790.2" width="3" height="49.1" fill="#8b8b8b"/>
<rect x="2049.0" y="791.2" width="140" height="10.3" fill="url(#mesh)"/>
<rect x="2049.0" y="802.5" width="140" height="9.8" fill="url(#grid)"/>
<rect x="2148.0" y="792.2" width="28" height="7.4" rx="3" fill="#151515"/>
<rect x="2063.0" y="807.9" width="115" height="2.0" fill="#222"/>
<rect x="2179.0" y="792.7" width="13" height="5.9" rx="3" fill="#2ab3b8"/>
<rect x="2179.0" y="804.9" width="13" height="5.9" rx="3" fill="#2ab3b8"/>
<rect x="2049.0" y="815.8" width="140" height="10.3" fill="url(#mesh)"/>
<rect x="2049.0" y="827.0" width="140" height="9.8" fill="url(#grid)"/>
<rect x="2148.0" y="816.7" width="28" height="7.4" rx="3" fill="#151515"/>
<rect x="2063.0" y="832.4" width="115" height="2.0" fill="#222"/>
<rect x="2179.0" y="817.2" width="13" height="5.9" rx="3" fill="#2ab3b8"/>
<rect x="2179.0" y="829.5" width="13" height="5.9" rx="3" fill="#2ab3b8"/>
</g>

<g opacity="1">
<rect x="1653.0" y="986.7" width="540" height="49.1" fill="#a9a7a2"/>
<rect x="1656.0" y="987.7" width="157" height="22.6" fill="url(#grid)"/>
<ellipse cx="1738.0" cy="995.5" rx="28" ry="4.2" fill="#bdbdbd" stroke="#7a7a7a" stroke-width="1"/>
<rect x="1661.0" y="1002.9" width="150" height="2.5" rx="1.5" fill="#1f1f1f"/>
<rect x="1803.0" y="1000.9" width="9" height="5.4" rx="2" fill="#2ab3b8"/>
<rect x="1656.0" y="1012.2" width="157" height="22.6" fill="url(#grid)"/>
<ellipse cx="1738.0" cy="1020.1" rx="28" ry="4.2" fill="#bdbdbd" stroke="#7a7a7a" stroke-width="1"/>
<rect x="1658.0" y="1010.2" width="155" height="2" fill="#d9c9b0"/>
<rect x="1661.0" y="1027.4" width="150" height="2.5" rx="1.5" fill="#1f1f1f"/>
<rect x="1803.0" y="1025.5" width="9" height="5.4" rx="2" fill="#2ab3b8"/>
<rect x="1653.0" y="986.7" width="3" height="49.1" fill="#5b6f98"/>
<rect x="1813.0" y="986.7" width="4" height="49.1" fill="#8b8b8b"/>
<rect x="1817.0" y="986.7" width="228" height="49.1" fill="#bdbab5"/>
<rect x="1823.0" y="988.7" width="215" height="5.9" fill="url(#slots)"/>
<rect x="1825.0" y="995.5" width="35" height="35.4" fill="#2e2a25" stroke="#d8d8d8" stroke-width="1"/>
<rect x="1831.0" y="1003.9" width="23" height="3.9" fill="#8a8580"/>
<rect x="1831.0" y="1013.7" width="23" height="3.9" fill="#6f6b66"/>
<rect x="1848.0" y="996.5" width="9" height="5.9" rx="2" fill="#2ab3b8"/>
<rect x="1866.0" y="995.5" width="40" height="35.4" fill="#2e2a25" stroke="#d8d8d8" stroke-width="1"/>
<rect x="1872.0" y="1003.9" width="28" height="3.9" fill="#8a8580"/>
<rect x="1872.0" y="1013.7" width="28" height="3.9" fill="#6f6b66"/>
<rect x="1894.0" y="996.5" width="9" height="5.9" rx="2" fill="#2ab3b8"/>
<rect x="1909.0" y="995.5" width="32" height="35.4" fill="#2e2a25" stroke="#d8d8d8" stroke-width="1"/>
<rect x="1915.0" y="1003.9" width="20" height="3.9" fill="#8a8580"/>
<rect x="1915.0" y="1013.7" width="20" height="3.9" fill="#6f6b66"/>
<rect x="1929.0" y="996.5" width="9" height="5.9" rx="2" fill="#2ab3b8"/>
<rect x="1944.0" y="995.5" width="42" height="35.4" fill="#2e2a25" stroke="#d8d8d8" stroke-width="1"/>
<rect x="1950.0" y="1003.9" width="30" height="3.9" fill="#8a8580"/>
<rect x="1950.0" y="1013.7" width="30" height="3.9" fill="#6f6b66"/>
<rect x="1974.0" y="996.5" width="9" height="5.9" rx="2" fill="#2ab3b8"/>
<rect x="1990.0" y="995.5" width="40" height="35.4" fill="#2e2a25" stroke="#d8d8d8" stroke-width="1"/>
<rect x="1996.0" y="1003.9" width="28" height="3.9" fill="#8a8580"/>
<rect x="1996.0" y="1013.7" width="28" height="3.9" fill="#6f6b66"/>
<rect x="2018.0" y="996.5" width="9" height="5.9" rx="2" fill="#2ab3b8"/>
<rect x="1817.0" y="1030.8" width="228" height="5" fill="#c8c5c0"/>
<rect x="1864.0" y="993.6" width="170" height="2.0" fill="#3a3632"/>
<rect x="2045.0" y="986.7" width="3" height="49.1" fill="#8b8b8b"/>
<rect x="2049.0" y="987.7" width="140" height="10.3" fill="url(#mesh)"/>
<rect x="2049.0" y="999.0" width="140" height="9.8" fill="url(#grid)"/>
<rect x="2148.0" y="988.6" width="28" height="7.4" rx="3" fill="#151515"/>
<rect x="2063.0" y="1004.4" width="115" height="2.0" fill="#222"/>
<rect x="2179.0" y="989.1" width="13" height="5.9" rx="3" fill="#2ab3b8"/>
<rect x="2179.0" y="1001.4" width="13" height="5.9" rx="3" fill="#2ab3b8"/>
<rect x="2049.0" y="1012.2" width="140" height="10.3" fill="url(#mesh)"/>
<rect x="2049.0" y="1023.5" width="140" height="9.8" fill="url(#grid)"/>
<rect x="2148.0" y="1013.2" width="28" height="7.4" rx="3" fill="#151515"/>
<rect x="2063.0" y="1028.9" width="115" height="2.0" fill="#222"/>
<rect x="2179.0" y="1013.7" width="13" height="5.9" rx="3" fill="#2ab3b8"/>
<rect x="2179.0" y="1026.0" width="13" height="5.9" rx="3" fill="#2ab3b8"/>
</g>

<g opacity="1">
<rect x="1653.0" y="1035.8" width="540" height="98.2" fill="#a9a7a2"/>
<rect x="1656.0" y="1036.8" width="157" height="47.1" fill="url(#grid)"/>
<ellipse cx="1738.0" cy="1053.5" rx="30" ry="8.3" fill="#bdbdbd" stroke="#7a7a7a" stroke-width="1"/>
<rect x="1661.0" y="1068.2" width="150" height="4.9" rx="1.5" fill="#1f1f1f"/>
<rect x="1803.0" y="1064.3" width="9" height="10.8" rx="2" fill="#2ab3b8"/>
<rect x="1656.0" y="1085.9" width="157" height="47.1" fill="url(#grid)"/>
<ellipse cx="1738.0" cy="1102.6" rx="30" ry="8.3" fill="#bdbdbd" stroke="#7a7a7a" stroke-width="1"/>
<rect x="1658.0" y="1083.9" width="155" height="2" fill="#d9c9b0"/>
<rect x="1661.0" y="1117.3" width="150" height="4.9" rx="1.5" fill="#1f1f1f"/>
<rect x="1803.0" y="1113.4" width="9" height="10.8" rx="2" fill="#2ab3b8"/>
<rect x="1653.0" y="1035.8" width="3" height="98.2" fill="#5b6f98"/>
<rect x="1813.0" y="1035.8" width="4" height="98.2" fill="#8b8b8b"/>
<rect x="1817.0" y="1035.8" width="228" height="98.2" fill="#bdbab5"/>
<rect x="1823.0" y="1037.8" width="215" height="11.8" fill="url(#slots)"/>
<rect x="1825.0" y="1053.5" width="35" height="70.7" fill="#2e2a25" stroke="#d8d8d8" stroke-width="1"/>
<rect x="1831.0" y="1070.2" width="23" height="7.9" fill="#8a8580"/>
<rect x="1831.0" y="1089.8" width="23" height="7.9" fill="#6f6b66"/>
<rect x="1848.0" y="1055.4" width="9" height="11.8" rx="2" fill="#2ab3b8"/>
<rect x="1866.0" y="1053.5" width="40" height="70.7" fill="#2e2a25" stroke="#d8d8d8" stroke-width="1"/>
<rect x="1872.0" y="1070.2" width="28" height="7.9" fill="#8a8580"/>
<rect x="1872.0" y="1089.8" width="28" height="7.9" fill="#6f6b66"/>
<rect x="1894.0" y="1055.4" width="9" height="11.8" rx="2" fill="#2ab3b8"/>
<rect x="1909.0" y="1053.5" width="32" height="70.7" fill="#2e2a25" stroke="#d8d8d8" stroke-width="1"/>
<rect x="1915.0" y="1070.2" width="20" height="7.9" fill="#8a8580"/>
<rect x="1915.0" y="1089.8" width="20" height="7.9" fill="#6f6b66"/>
<rect x="1929.0" y="1055.4" width="9" height="11.8" rx="2" fill="#2ab3b8"/>
<rect x="1944.0" y="1053.5" width="42" height="70.7" fill="#2e2a25" stroke="#d8d8d8" stroke-width="1"/>
<rect x="1950.0" y="1070.2" width="30" height="7.9" fill="#8a8580"/>
<rect x="1950.0" y="1089.8" width="30" height="7.9" fill="#6f6b66"/>
<rect x="1974.0" y="1055.4" width="9" height="11.8" rx="2" fill="#2ab3b8"/>
<rect x="1990.0" y="1053.5" width="40" height="70.7" fill="#2e2a25" stroke="#d8d8d8" stroke-width="1"/>
<rect x="1996.0" y="1070.2" width="28" height="7.9" fill="#8a8580"/>
<rect x="1996.0" y="1089.8" width="28" height="7.9" fill="#6f6b66"/>
<rect x="2018.0" y="1055.4" width="9" height="11.8" rx="2" fill="#2ab3b8"/>
<rect x="1817.0" y="1129.0" width="228" height="5" fill="#c8c5c0"/>
<rect x="1864.0" y="1049.5" width="170" height="3.9" fill="#3a3632"/>
<rect x="2045.0" y="1035.8" width="3" height="98.2" fill="#8b8b8b"/>
<rect x="2049.0" y="1036.8" width="140" height="20.6" fill="url(#mesh)"/>
<rect x="2049.0" y="1060.3" width="140" height="19.6" fill="url(#grid)"/>
<rect x="2148.0" y="1039.7" width="28" height="14.7" rx="3" fill="#151515"/>
<rect x="2063.0" y="1071.2" width="115" height="3.9" fill="#222"/>
<rect x="2179.0" y="1040.7" width="13" height="11.8" rx="3" fill="#2ab3b8"/>
<rect x="2179.0" y="1065.3" width="13" height="11.8" rx="3" fill="#2ab3b8"/>
<rect x="2049.0" y="1085.9" width="140" height="20.6" fill="url(#mesh)"/>
<rect x="2049.0" y="1109.4" width="140" height="19.6" fill="url(#grid)"/>
<rect x="2148.0" y="1088.8" width="28" height="14.7" rx="3" fill="#151515"/>
<rect x="2063.0" y="1120.3" width="115" height="3.9" fill="#222"/>
<rect x="2179.0" y="1089.8" width="13" height="11.8" rx="3" fill="#2ab3b8"/>
<rect x="2179.0" y="1114.4" width="13" height="11.8" rx="3" fill="#2ab3b8"/>
</g>
<rect x="1653.0" y="1183.2" width="540" height="49.1" fill="#e6e6e6"/>
<g opacity="0.45">
<rect x="1653.0" y="1183.2" width="540" height="49.1" fill="#a9a7a2"/>
<rect x="1656.0" y="1184.2" width="157" height="22.6" fill="url(#grid)"/>
<ellipse cx="1738.0" cy="1192.0" rx="28" ry="4.2" fill="#bdbdbd" stroke="#7a7a7a" stroke-width="1"/>
<rect x="1661.0" y="1199.4" width="150" height="2.5" rx="1.5" fill="#1f1f1f"/>
<rect x="1803.0" y="1197.4" width="9" height="5.4" rx="2" fill="#2ab3b8"/>
<rect x="1656.0" y="1208.7" width="157" height="22.6" fill="url(#grid)"/>
<ellipse cx="1738.0" cy="1216.5" rx="28" ry="4.2" fill="#bdbdbd" stroke="#7a7a7a" stroke-width="1"/>
<rect x="1658.0" y="1206.7" width="155" height="2" fill="#d9c9b0"/>
<rect x="1661.0" y="1223.9" width="150" height="2.5" rx="1.5" fill="#1f1f1f"/>
<rect x="1803.0" y="1221.9" width="9" height="5.4" rx="2" fill="#2ab3b8"/>
<rect x="1653.0" y="1183.2" width="3" height="49.1" fill="#5b6f98"/>
<rect x="1813.0" y="1183.2" width="4" height="49.1" fill="#8b8b8b"/>
<rect x="1817.0" y="1183.2" width="228" height="49.1" fill="#bdbab5"/>
<rect x="1823.0" y="1185.2" width="215" height="5.9" fill="url(#slots)"/>
<rect x="1825.0" y="1192.0" width="35" height="35.4" fill="#2e2a25" stroke="#d8d8d8" stroke-width="1"/>
<rect x="1831.0" y="1200.3" width="23" height="3.9" fill="#8a8580"/>
<rect x="1831.0" y="1210.2" width="23" height="3.9" fill="#6f6b66"/>
<rect x="1848.0" y="1193.0" width="9" height="5.9" rx="2" fill="#2ab3b8"/>
<rect x="1866.0" y="1192.0" width="40" height="35.4" fill="#2e2a25" stroke="#d8d8d8" stroke-width="1"/>
<rect x="1872.0" y="1200.3" width="28" height="3.9" fill="#8a8580"/>
<rect x="1872.0" y="1210.2" width="28" height="3.9" fill="#6f6b66"/>
<rect x="1894.0" y="1193.0" width="9" height="5.9" rx="2" fill="#2ab3b8"/>
<rect x="1909.0" y="1192.0" width="32" height="35.4" fill="#2e2a25" stroke="#d8d8d8" stroke-width="1"/>
<rect x="1915.0" y="1200.3" width="20" height="3.9" fill="#8a8580"/>
<rect x="1915.0" y="1210.2" width="20" height="3.9" fill="#6f6b66"/>
<rect x="1929.0" y="1193.0" width="9" height="5.9" rx="2" fill="#2ab3b8"/>
<rect x="1944.0" y="1192.0" width="42" height="35.4" fill="#2e2a25" stroke="#d8d8d8" stroke-width="1"/>
<rect x="1950.0" y="1200.3" width="30" height="3.9" fill="#8a8580"/>
<rect x="1950.0" y="1210.2" width="30" height="3.9" fill="#6f6b66"/>
<rect x="1974.0" y="1193.0" width="9" height="5.9" rx="2" fill="#2ab3b8"/>
<rect x="1990.0" y="1192.0" width="40" height="35.4" fill="#2e2a25" stroke="#d8d8d8" stroke-width="1"/>
<rect x="1996.0" y="1200.3" width="28" height="3.9" fill="#8a8580"/>
<rect x="1996.0" y="1210.2" width="28" height="3.9" fill="#6f6b66"/>
<rect x="2018.0" y="1193.0" width="9" height="5.9" rx="2" fill="#2ab3b8"/>
<rect x="1817.0" y="1227.3" width="228" height="5" fill="#c8c5c0"/>
<rect x="1864.0" y="1190.0" width="170" height="2.0" fill="#3a3632"/>
<rect x="2045.0" y="1183.2" width="3" height="49.1" fill="#8b8b8b"/>
<rect x="2049.0" y="1184.2" width="140" height="10.3" fill="url(#mesh)"/>
<rect x="2049.0" y="1195.4" width="140" height="9.8" fill="url(#grid)"/>
<rect x="2148.0" y="1185.1" width="28" height="7.4" rx="3" fill="#151515"/>
<rect x="2063.0" y="1200.8" width="115" height="2.0" fill="#222"/>
<rect x="2179.0" y="1185.6" width="13" height="5.9" rx="3" fill="#2ab3b8"/>
<rect x="2179.0" y="1197.9" width="13" height="5.9" rx="3" fill="#2ab3b8"/>
<rect x="2049.0" y="1208.7" width="140" height="10.3" fill="url(#mesh)"/>
<rect x="2049.0" y="1220.0" width="140" height="9.8" fill="url(#grid)"/>
<rect x="2148.0" y="1209.7" width="28" height="7.4" rx="3" fill="#151515"/>
<rect x="2063.0" y="1225.4" width="115" height="2.0" fill="#222"/>
<rect x="2179.0" y="1210.2" width="13" height="5.9" rx="3" fill="#2ab3b8"/>
<rect x="2179.0" y="1222.4" width="13" height="5.9" rx="3" fill="#2ab3b8"/>
</g>
</svg>
<div class="box" style="left:203.5px;top:193.2px;width:462.2px;height:41.5px;background:#7e8e9a;border:3px solid #080808"></div>
<div class="a" style="left:221.9px;top:200.3px;font-size:29px;color:#eef0f3;letter-spacing:0.02px;-webkit-text-stroke-width:0.4px;">QTS patch panel A - Patch Panel</div>
<div class="box" style="left:203.5px;top:291.7px;width:462.2px;height:40.5px;background:#7e8e9a;border:3px solid #080808"></div>
<div class="a" style="left:221.9px;top:298.3px;font-size:29px;color:#eef0f3;letter-spacing:-0.09px;-webkit-text-stroke-width:0.4px;">QTS patch panel B - Patch Panel</div>
<div class="box" style="left:328.5px;top:414.0px;width:211.4px;height:41.3px;background:#7e8e9a;border:3px solid #080808"></div>
<div class="a" style="left:347.4px;top:421.0px;font-size:29px;color:#eef0f3;letter-spacing:0.10px;-webkit-text-stroke-width:0.4px;">QTS switch A</div>
<div class="box" style="left:329.1px;top:610.3px;width:210.9px;height:41.5px;background:#7e8e9a;border:3px solid #080808"></div>
<div class="a" style="left:348.0px;top:617.4px;font-size:29px;color:#eef0f3;letter-spacing:-0.23px;-webkit-text-stroke-width:0.4px;">QTS switch B</div>
<div class="box" style="left:339.3px;top:684.3px;width:189.7px;height:41.5px;background:#7e8e9a;border:3px solid #080808"></div>
<div class="a" style="left:359.3px;top:691.4px;font-size:29px;color:#eef0f3;letter-spacing:-0.38px;-webkit-text-stroke-width:0.4px;">FASwitch01</div>
<div class="box" style="left:262.7px;top:806.9px;width:343.7px;height:40.3px;background:#7e8e9a;border:3px solid #080808"></div>
<div class="a" style="left:281.6px;top:813.4px;font-size:29px;color:#eef0f3;letter-spacing:-0.14px;-webkit-text-stroke-width:0.4px;">wh-lab-sw-01 - Switch 4</div>
</div>
<div class="box" style="left:2275.2px;top:426.8px;width:12.8px;height:358.2px;background:#6b6e76;border-radius:7px"></div>
<div class="box" style="left:840.7px;top:1293.1px;width:1206.9px;height:13.9px;background:rgba(128,131,138,0.8);border-radius:7px"></div>
<div class="box" style="left:2354.2px;top:275.8px;width:30.8px;height:30.8px;border-radius:50%;background:#dcdde0"></div>
<div class="a" style="left:2363.6px;top:281.9px;font-size:20px;color:#151820;font-weight:700;font-family:'Liberation Mono',monospace;">i</div>
<div class="a" style="left:2402.8px;top:279.4px;font-size:30px;color:#8997a3;letter-spacing:0.16px;-webkit-text-stroke-width:0.5px;">Use this screen to configure</div>
<div class="a" style="left:2354.8px;top:322.6px;font-size:30px;color:#8997a3;letter-spacing:0.21px;-webkit-text-stroke-width:0.5px;">the current location rackables</div>
<div class="a" style="left:2354.8px;top:366.5px;font-size:30px;color:#8997a3;letter-spacing:-0.24px;-webkit-text-stroke-width:0.5px;">Devices, Assets and Power Units</div>
<div class="a" style="left:2354.8px;top:408.8px;font-size:30px;color:#8997a3;letter-spacing:2.10px;-webkit-text-stroke-width:0.5px;">for</div>
<div class="a" style="left:2403.0px;top:408.8px;font-size:30px;color:#8997a3;"><i style="font-weight:700">A Rack</i></div>
<svg class="box" style="left:2354.5px;top:480.5px" width="27.0" height="18.0"><polyline points="3,3 13.5,15.0 24.0,3" fill="none" stroke="#6a7584" stroke-width="3.4" stroke-linecap="round" stroke-linejoin="round"/></svg>
<div class="a" style="left:2392.3px;top:475.0px;font-size:30px;color:#6d7886;letter-spacing:-0.97px;-webkit-text-stroke-width:0.5px;">Tips</div>
<svg class="box" style="left:2353px;top:532.2px" width="16" height="22"><path d="M12.5,3 L12.5,19 C8,17 4,14 2.5,11 C4,8 8,5 12.5,3 Z" fill="#dcdee2" stroke="#dcdee2" stroke-width="1.6" stroke-linejoin="round"/></svg>
<div class="a" style="left:2402.8px;top:529.8px;font-size:30px;color:#8997a3;letter-spacing:-0.05px;-webkit-text-stroke-width:0.5px;">Select or hover over an</div>
<div class="a" style="left:2354.8px;top:573.5px;font-size:30px;color:#8997a3;letter-spacing:-0.01px;-webkit-text-stroke-width:0.5px;">element to see details.</div>
<svg class="box" style="left:2353px;top:629.8px" width="16" height="22"><path d="M12.5,3 L12.5,19 C8,17 4,14 2.5,11 C4,8 8,5 12.5,3 Z" fill="#dcdee2" stroke="#dcdee2" stroke-width="1.6" stroke-linejoin="round"/></svg>
<div class="a" style="left:2402.8px;top:627.4px;font-size:30px;color:#8997a3;letter-spacing:0.26px;-webkit-text-stroke-width:0.5px;">Drag items to move their</div>
<div class="a" style="left:2354.8px;top:671.1px;font-size:30px;color:#8997a3;letter-spacing:0.13px;-webkit-text-stroke-width:0.5px;">position on the rack.</div>
<svg class="box" style="left:2353px;top:729.0px" width="16" height="22"><path d="M12.5,3 L12.5,19 C8,17 4,14 2.5,11 C4,8 8,5 12.5,3 Z" fill="#dcdee2" stroke="#dcdee2" stroke-width="1.6" stroke-linejoin="round"/></svg>
<div class="a" style="left:2402.8px;top:726.6px;font-size:30px;color:#8997a3;letter-spacing:0.01px;-webkit-text-stroke-width:0.5px;">Only physical devices where</div>
<div class="a" style="left:2354.8px;top:770.3px;font-size:30px;color:#8997a3;letter-spacing:0.09px;-webkit-text-stroke-width:0.5px;">subtype attribute 'Rack' is true and</div>
<div class="a" style="left:2354.8px;top:814.0px;font-size:30px;color:#8997a3;letter-spacing:0.20px;-webkit-text-stroke-width:0.5px;">have hardware model with defined</div>
<div class="a" style="left:2354.8px;top:857.7px;font-size:30px;color:#8997a3;letter-spacing:-0.30px;-webkit-text-stroke-width:0.5px;">size can be Rack Mounted.</div>
<svg class="box" style="left:0;top:0" width="1000" height="1300" viewBox="0 0 1000 1300">
<path d="M506.3,1251.2 L891.3,949.3 L883.3,939.6 L929.2,929.6 L907.1,971.1 L900.3,961.5 L509.7,1255.6 Z" fill="#f22f40" stroke="#f22f40" stroke-width="1.2" stroke-linejoin="round"/>
<circle cx="508" cy="1253.4" r="2.8" fill="#f22f40"/>
</svg>

</body></html>
